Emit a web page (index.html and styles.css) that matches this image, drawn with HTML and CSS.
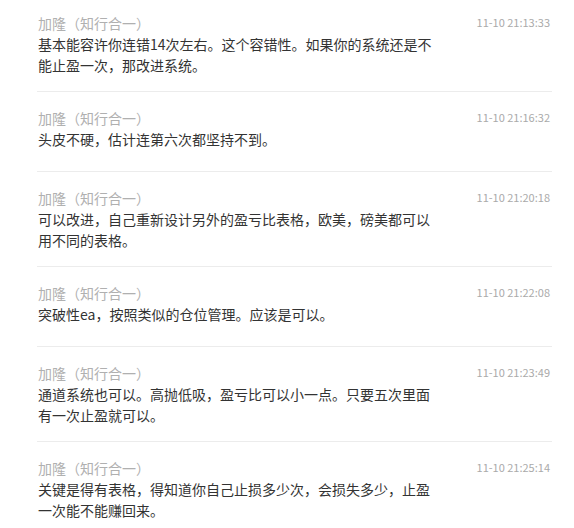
FILE: index.html
```html
<!DOCTYPE html>
<html lang="zh-CN">
<head>
    <meta charset="UTF-8">
    <meta name="viewport" content="width=device-width, initial-scale=1.0">
    <title>评论</title>
    <link rel="stylesheet" href="styles.css">
</head>
<body>
    <div class="comment-list">
        <div class="comment">
            <div class="comment-head">
                <span class="author">加隆（知行合一）</span>
                <span class="time">11-10 21:13:33</span>
            </div>
            <div class="comment-text">基本能容许你连错14次左右。这个容错性。如果你的系统还是不<br>能止盈一次，那改进系统。</div>
        </div>
        <div class="comment">
            <div class="comment-head">
                <span class="author">加隆（知行合一）</span>
                <span class="time">11-10 21:16:32</span>
            </div>
            <div class="comment-text">头皮不硬，估计连第六次都坚持不到。</div>
        </div>
        <div class="comment">
            <div class="comment-head">
                <span class="author">加隆（知行合一）</span>
                <span class="time">11-10 21:20:18</span>
            </div>
            <div class="comment-text">可以改进，自己重新设计另外的盈亏比表格，欧美，磅美都可以<br>用不同的表格。</div>
        </div>
        <div class="comment">
            <div class="comment-head">
                <span class="author">加隆（知行合一）</span>
                <span class="time">11-10 21:22:08</span>
            </div>
            <div class="comment-text">突破性ea，按照类似的仓位管理。应该是可以。</div>
        </div>
        <div class="comment">
            <div class="comment-head">
                <span class="author">加隆（知行合一）</span>
                <span class="time">11-10 21:23:49</span>
            </div>
            <div class="comment-text">通道系统也可以。高抛低吸，盈亏比可以小一点。只要五次里面<br>有一次止盈就可以。</div>
        </div>
        <div class="comment">
            <div class="comment-head">
                <span class="author">加隆（知行合一）</span>
                <span class="time">11-10 21:25:14</span>
            </div>
            <div class="comment-text">关键是得有表格，得知道你自己止损多少次，会损失多少，止盈<br>一次能不能赚回来。</div>
        </div>
    </div>
</body>
</html>
```

FILE: styles.css
```css
/* Basic reset */
* {
    margin: 0;
    padding: 0;
    box-sizing: border-box;
    font-family: "Noto Sans CJK SC", "Noto Sans", sans-serif;
}

body {
    background-color: #fff;
}

/* Comment list */
.comment-list {
    width: 515px;
    margin-left: 37px;
}

.comment {
    padding: 15px 0 15px 1px;
    border-bottom: 1px solid #ececec;
}

.comment:first-child {
    padding-top: 12px;
}

.comment-head {
    display: flex;
    justify-content: space-between;
    align-items: center;
    height: 22px;
}

.author {
    font-size: 14px;
    color: #b0b0b0;
}

.time {
    font-size: 11px;
    color: #aaa;
    margin-right: 2px;
    margin-top: -2px;
}

.comment-text {
    font-size: 14px;
    line-height: 21px;
    color: #333;
    min-height: 27px;
}
```
